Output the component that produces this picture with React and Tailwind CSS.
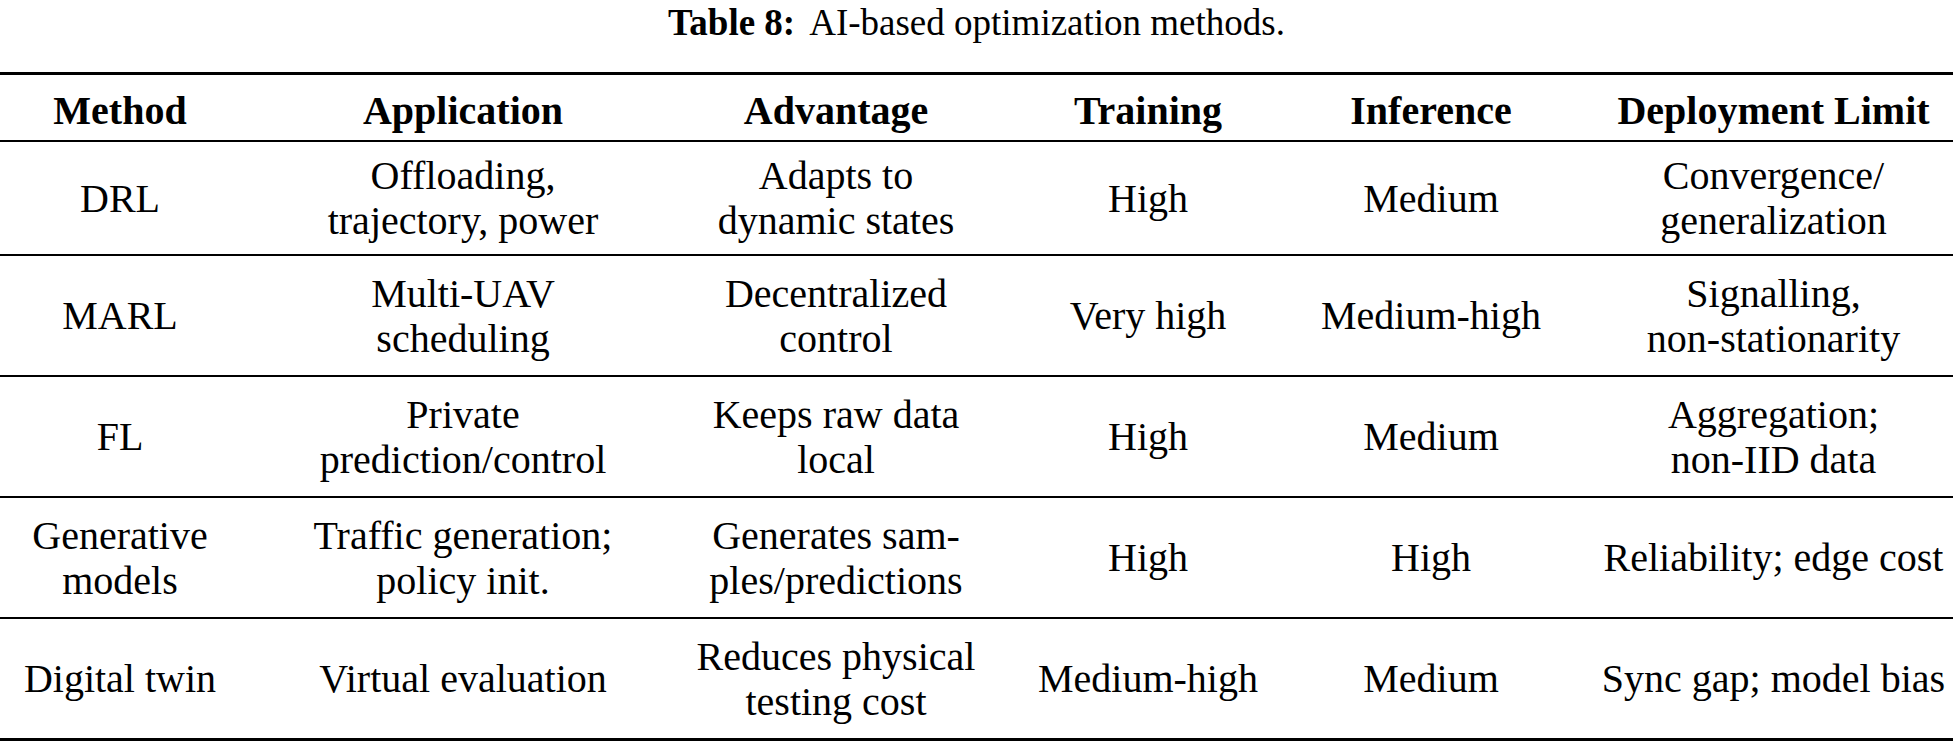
import React from 'react';

const rows = [
  {
    h: 'h-[114px] border-b-2',
    cells: ['DRL', ['Offloading,', 'trajectory, power'], ['Adapts to', 'dynamic states'], 'High', 'Medium', ['Convergence/', 'generalization']],
  },
  {
    h: 'h-[121px] border-b-2',
    cells: ['MARL', ['Multi-UAV', 'scheduling'], ['Decentralized', 'control'], 'Very high', 'Medium-high', ['Signalling,', 'non-stationarity']],
  },
  {
    h: 'h-[121px] border-b-2',
    cells: ['FL', ['Private', 'prediction/control'], ['Keeps raw data', 'local'], 'High', 'Medium', ['Aggregation;', 'non-IID data']],
  },
  {
    h: 'h-[121px] border-b-2',
    cells: [['Generative', 'models'], ['Traffic generation;', 'policy init.'], ['Generates sam-', 'ples/predictions'], 'High', 'High', 'Reliability; edge cost'],
  },
  {
    h: 'h-[122px] border-b-[3px]',
    cells: ['Digital twin', 'Virtual evaluation', ['Reduces physical', 'testing cost'], 'Medium-high', 'Medium', 'Sync gap; model bias'],
  },
];

const headers = ['Method', 'Application', 'Advantage', 'Training', 'Inference', 'Deployment Limit'];

// last column sits a bit to the right of its share
const cellPad = ['', '', '', '', '', 'pl-[42px]'];

const Cell = ({ value, i }) => (
  <div className={`flex flex-col items-center justify-center text-center whitespace-nowrap font-['Liberation_Serif'] ${cellPad[i]}`}>
    {Array.isArray(value) ? value.map((line) => <span key={line}>{line}</span>) : <span>{value}</span>}
  </div>
);

const App = () => {
  return (
    <div className="w-[1953px] h-[745px] bg-white text-black overflow-hidden">
      <div className="h-[72px] pt-[4px] text-center text-[37px] leading-[37px] font-['Liberation_Serif']">
        <span className="font-bold">Table 8:</span>
        <span className="ml-[14px]">AI-based optimization methods.</span>
      </div>

      <div className="border-t-[3px] border-black">
        <div className="grid grid-cols-[240px_446px_300px_324px_242px_1fr] h-[67px] pt-[5px] border-b-2 border-black text-[40px] leading-[43px] font-bold">
          {headers.map((h, i) => (
            <Cell key={h} value={h} i={i} />
          ))}
        </div>

        {rows.map((row, r) => (
          <div
            key={r}
            className={`grid grid-cols-[240px_446px_300px_324px_242px_1fr] border-black text-[40px] leading-[45px] ${row.h}`}
          >
            {row.cells.map((c, i) => (
              <Cell key={i} value={c} i={i} />
            ))}
          </div>
        ))}
      </div>
    </div>
  );
};

export default App;
